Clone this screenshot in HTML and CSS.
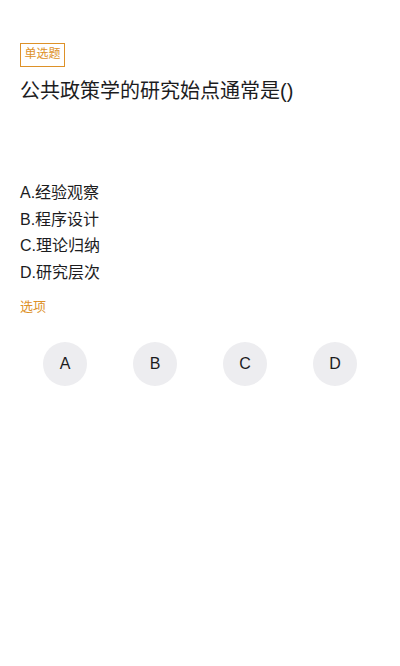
FILE: index.html
```html
<!DOCTYPE html>
<html lang="zh">
<head>
<meta charset="utf-8">
<link rel="stylesheet" href="styles.css">
</head>
<body>
<div class="page">
  <div class="tag">单选题</div>
  <div class="question">公共政策学的研究始点通常是()</div>
  <div class="options">
    <div class="option">A.经验观察</div>
    <div class="option">B.程序设计</div>
    <div class="option">C.理论归纳</div>
    <div class="option">D.研究层次</div>
  </div>
  <div class="label">选项</div>
  <div class="answers">
    <div class="cell"><div class="circle">A</div></div>
    <div class="cell"><div class="circle">B</div></div>
    <div class="cell"><div class="circle">C</div></div>
    <div class="cell"><div class="circle">D</div></div>
  </div>
</div>
</body>
</html>
```
FILE: styles.css
```css
html, body {
  margin: 0;
  padding: 0;
  background: #ffffff;
}
body {
  font-family: "Liberation Sans", "Noto Sans CJK SC", sans-serif;
  color: #1c1c1e;
}
.page {
  padding: 43px 20px 0 20px;
}
.tag {
  display: block;
  width: fit-content;
  box-sizing: border-box;
  height: 24px;
  line-height: 21px;
  padding: 0 3.5px;
  border: 1.5px solid #dd9128;
  color: #dd9128;
  font-size: 12px;
}
.question {
  margin-top: 10px;
  font-size: 20px;
  line-height: 28px;
}
.options {
  margin-top: 75px;
}
.option {
  font-size: 16px;
  line-height: 26.67px;
}
.label {
  margin-top: 10px;
  font-size: 13px;
  line-height: 20px;
  color: #dd9128;
}
.answers {
  margin-top: 25px;
  display: grid;
  grid-template-columns: repeat(4, 1fr);
}
.cell {
  display: flex;
  justify-content: center;
}
.circle {
  width: 44px;
  height: 44px;
  border-radius: 50%;
  background: #ededf0;
  display: flex;
  align-items: center;
  justify-content: center;
  font-size: 16px;
  color: #1c1c1e;
}
```
